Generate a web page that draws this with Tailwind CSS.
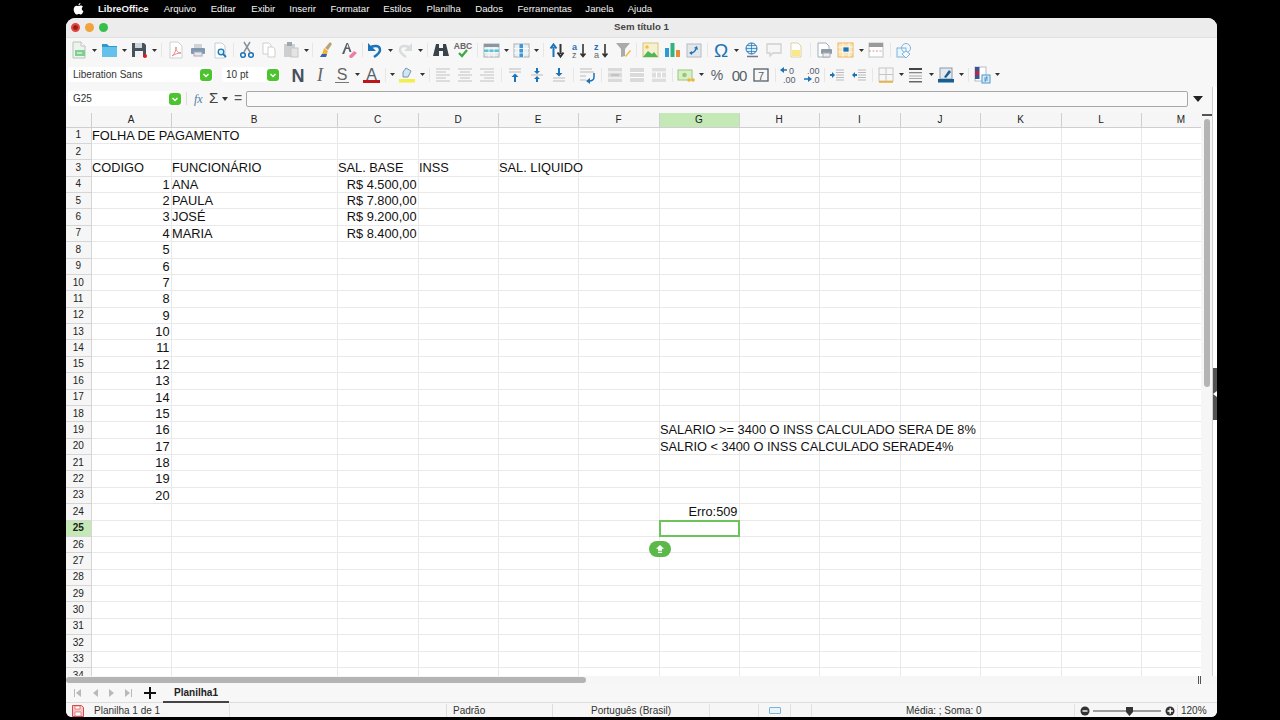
<!DOCTYPE html>
<html lang="en">
<head>
  <meta charset="UTF-8">
  <title>Sem título 1</title>
  <script src="https://cdn.jsdelivr.net/npm/@tailwindcss/browser@4"></script>
</head>
<body class="bg-black font-['Liberation_Sans',sans-serif] w-[1280px] h-[720px] overflow-hidden text-[#222]">
  <!-- Mac menu bar -->
  <div class="h-[18px] flex items-center text-[#f2f2f2] text-[9.6px] pl-[73px]">
    <svg class="w-[11px] h-[12px] mr-[14px]" viewBox="0 0 14 16"><path fill="#fff" d="M9.6 0c.1 1.200-1.100 2.900-2.700 2.900C6.800 1.500 8.100.1 9.600 0zM7 4.100c.8 0 1.700-.7 3-.7 1 0 2.200.5 2.900 1.600-2.400 1.500-2 4.800.6 5.900-.6 1.700-2 4.500-3.500 4.500-.9 0-1.300-.6-2.500-.6s-1.700.6-2.500.6C3.100 15.400.6 11.800.6 8.500c0-3 1.900-4.900 3.800-4.900 1.100 0 2 .5 2.600.5z"/></svg>
    <span class="font-bold mr-[15px]">LibreOffice</span>
    <span class="mr-[14.500px]">Arquivo</span>
    <span class="mr-[15.500px]">Editar</span>
    <span class="mr-[14px]">Exibir</span>
    <span class="mr-[14.500px]">Inserir</span>
    <span class="mr-[14px]">Formatar</span>
    <span class="mr-[15px]">Estilos</span>
    <span class="mr-[14.500px]">Planilha</span>
    <span class="mr-[14.500px]">Dados</span>
    <span class="mr-[13.500px]">Ferramentas</span>
    <span class="mr-[14px]">Janela</span>
    <span>Ajuda</span>
  </div>

  <!-- Window -->
  <div class="ml-[66px] w-[1151px] h-[699px] rounded-t-[9px] rounded-b-[6px] overflow-hidden bg-[#f7f7f7] flex flex-col">
    <div class="h-[20px] shrink-0 relative flex items-center justify-center bg-[#ececec] border-b border-[#e0e0e0] text-[9.7px] font-bold text-[#444]">
      <div class="absolute left-[5px] top-[5px] flex gap-[5px]">
        <span class="w-[9px] h-[9px] rounded-full bg-[#e5453d] border-[2.5px] border-[#e5453d] [box-shadow:inset_0_0_0_3px_#9c1c18]"></span>
        <span class="w-[9px] h-[9px] rounded-full bg-[#f2a33a]"></span>
        <span class="w-[9px] h-[9px] rounded-full bg-[#37bf4c]"></span>
      </div>
      <span>Sem título 1</span>
    </div>

    <div id="tb1" class="h-[24px] shrink-0 flex items-center pl-[2px]"></div>

    <div class="h-[25px] shrink-0 flex items-center pl-[2px]">
      <div class="w-[145px] h-[15px] rounded-[3px] bg-white flex items-center justify-between pl-[5px] pr-[1px] text-[10px] text-[#333]">
        Liberation Sans
        <span class="w-[12px] h-[12px] rounded-[3px] bg-[#4cc42e] flex items-center justify-center"><svg class="w-[8px] h-[8px]" viewBox="0 0 8 8"><path d="M1.500 3l2.500 2.500L6.500 3" stroke="#fff" stroke-width="1.500" fill="none"/></svg></span>
      </div>
      <div class="ml-[9px] w-[58px] h-[15px] rounded-[3px] bg-white flex items-center justify-between pl-[4px] pr-[1px] text-[10px] text-[#333]">
        10 pt
        <span class="w-[12px] h-[12px] rounded-[3px] bg-[#4cc42e] flex items-center justify-center"><svg class="w-[8px] h-[8px]" viewBox="0 0 8 8"><path d="M1.500 3l2.500 2.500L6.500 3" stroke="#fff" stroke-width="1.500" fill="none"/></svg></span>
      </div>
      <div id="tb2" class="flex items-center pl-[7px]"></div>
    </div>

    <div class="flex-1 min-h-0 flex">
      <div class="flex-1 min-w-0 flex flex-col">
        <!-- Formula bar -->
        <div class="h-[26px] shrink-0 flex items-center pl-[2px] pb-[3px] relative">
          <div class="w-[114px] h-[15px] rounded-[3px] bg-white flex items-center justify-between pl-[5px] pr-[1px] text-[10px] text-[#333]">
            G25
            <span class="w-[12px] h-[12px] rounded-[3px] bg-[#4cc42e] flex items-center justify-center"><svg class="w-[8px] h-[8px]" viewBox="0 0 8 8"><path d="M1.500 3l2.500 2.500L6.500 3" stroke="#fff" stroke-width="1.500" fill="none"/></svg></span>
          </div>
          <span class="ml-[4px] w-px h-[13px] bg-[#ddd]"></span>
          <span class="ml-[7px] w-[13px] text-[12px] italic text-[#4a7fa8] font-['Liberation_Serif',serif]">fx</span>
          <span class="ml-[2px] w-[12px] text-[15px] text-[#444]">Σ</span>
          <svg class="ml-[1px] w-[6px] h-[4px]" viewBox="0 0 6 4"><path d="M0 0h6L3 4z" fill="#333"/></svg>
          <span class="ml-[6px] w-[10px] text-[14px] text-[#555]">=</span>
          <div class="ml-[2px] w-[942px] h-[16px] rounded-[2px] border border-[#a8a8a8] bg-[#fafafa]"></div>
          <svg class="ml-[5px] w-[10px] h-[6px]" viewBox="0 0 10 6"><path d="M0 0h10L5 6z" fill="#222"/></svg>
        </div>
        <!-- Sheet -->
        <div class="flex-1 min-h-0 flex">
          <div class="flex-1 min-w-0 overflow-hidden relative bg-white">
            <div id="sheet" class="grid grid-cols-[25.5px_80px_166px_81px_80px_80px_81px_80px_80px_81px_80px_81px_80px_80px] grid-rows-[14.5px] auto-rows-[16.38px] text-[12.8px] leading-[16px] text-[#111]"></div>
            <!-- cell cursor and the little green badge -->
            <div class="absolute z-20 left-[592.5px] top-[406.5px] w-[81px] h-[17px] border-2 border-[#6cc35a]"></div>
            <div class="absolute z-20 left-[583px] top-[428px] w-[22px] h-[16px] rounded-[8px] bg-[#5cb848] flex items-center justify-center">
              <svg class="w-[10px] h-[10px]" viewBox="0 0 10 10"><path d="M5 1 9 4.800H7v2H3v-2H1zM3 7.700h4v1.300H3z" fill="#fff"/></svg>
            </div>
          </div>
          <!-- Vertical scroll -->
          <div class="w-[11px] shrink-0 bg-[#f6f6f6] flex flex-col items-center pt-[1px]">
            <span class="w-[10px] h-[2px] bg-[#555] mb-[3px]"></span>
            <span class="w-[6px] h-[268px] rounded-[3px] bg-[#b4b4b4]"></span>
          </div>
        </div>
      </div>
      <!-- Sidebar handle -->
      <div class="w-[5px] shrink-0 border-l border-[#d0d0d0] bg-white flex flex-col pt-[281px]">
        <div class="h-[52px] bg-[#525252] flex items-center justify-center">
          <svg class="w-[4px] h-[6px]" viewBox="0 0 4 6"><path d="M4 0v6L0 3z" fill="#fff"/></svg>
        </div>
      </div>
    </div>

    <!-- Horizontal scroll -->
    <div class="h-[8px] shrink-0 flex items-center relative bg-[#f6f6f6]">
      <span class="w-[520px] h-[6px] rounded-[3px] bg-[#b4b4b4]"></span>
      <span class="absolute left-[1132px] top-0 w-[3px] h-[8px] border-x border-[#555]"></span>
    </div>

    <!-- Sheet tabs -->
    <div class="h-[19px] shrink-0 flex items-center border-b border-[#dcdcdc] relative">
      <svg class="ml-[7px] w-[60px] h-[10px]" viewBox="0 0 60 10" fill="#b9b9b9">
        <path d="M1 1h1v8H1zM8 1v8L3 5z"/><path d="M25 1v8l-5-4z"/><path d="M36 1v8l5-4z"/><path d="M52 1v8l5-4zM58 1h1v8h-1z"/>
      </svg>
      <svg class="ml-[11px] w-[12px] h-[12px]" viewBox="0 0 12 12"><path d="M5 0h2v5h5v2H7v5H5V7H0V5h5z" fill="#111"/></svg>
      <div class="ml-[7px] w-[66px] h-[19px] flex items-center justify-center text-[10px] font-bold text-[#222] border-b-2 border-[#444]">Planilha1</div>
    </div>

    <!-- Status bar -->
    <div class="h-[14px] shrink-0 flex items-center pt-[1px] text-[10px] text-[#333] bg-[#f6f6f6]">
      <div class="w-[163px] flex items-center shrink-0 pl-[6px]">
        <svg class="w-[12px] h-[12px] mr-[10px]" viewBox="0 0 12 12"><path d="M.500.500h9l2 2v9H.500z" fill="#f6c8c8" stroke="#d84a4a"/><path d="M3 1h5v3H3zM3 7h6v4H3z" fill="#fff" stroke="#d84a4a" stroke-width=".6"/></svg>
        Planilha 1 de 1
      </div>
      <div class="w-[217px] h-full border-l border-[#e2e2e2]"></div>
      <div class="w-[106px] h-full border-l border-[#ddd] pl-[6px] flex items-center">Padrão</div>
      <div class="w-[157px] h-full border-l border-[#ddd] pl-[38px] flex items-center">Português (Brasil)</div>
      <div class="w-[49px] h-full border-l border-[#e2e2e2]"></div>
      <div class="w-[32px] h-full border-l border-[#e2e2e2] flex items-center justify-center"><span class="w-[12px] h-[7px] rounded-[1px] border border-[#7fb2d9] bg-[#e9f3fa]"></span></div>
      <div class="w-[21px] h-full border-l border-[#e2e2e2]"></div>
      <div class="w-[263px] h-full border-l border-[#e2e2e2] flex items-center pl-[94px]">Média: ; Soma: 0</div>
      <div class="w-[103px] h-full border-l border-[#e2e2e2] flex items-center pl-[5px]">
        <svg class="w-[96px] h-[10px]" viewBox="0 0 96 10">
          <circle cx="5" cy="5" r="4.500" fill="#333"/><rect x="2.500" y="4.300" width="5" height="1.400" fill="#fff"/>
          <rect x="13" y="4.500" width="68" height="1" fill="#444"/>
          <path d="M46 1h7v5l-3.500 4L46 6z" fill="#333"/>
          <circle cx="90" cy="5" r="4.500" fill="#333"/><path d="M87.500 4.300h2v-2h1.400v2h2v1.400h-2v2h-1.400v-2h-2z" fill="#fff"/>
        </svg>
      </div>
      <div class="flex-1 h-full border-l border-[#e2e2e2] flex items-center pl-[3px]">120%</div>
    </div>
  </div>

  <script>
    // Toolbar icons, drawn on a 22x22 box
    const icons = {
      newdoc: '<path d="M5 3h8l4 4v12H5z" fill="#eef3ee" stroke="#b9c3b9"/><path d="M13 3v4h4" fill="#fff" stroke="#b9c3b9"/><rect x="7" y="11" width="10" height="6" fill="#7fcf92"/><path d="M9 14h5" stroke="#fff"/>',
      folder: '<path d="M4 5h5l2 2h8v11H4z" fill="#2f98cf"/><rect x="4" y="8" width="15" height="10" fill="#63c1ea"/>',
      save: '<path d="M4 4h12l2 2v12H4z" fill="#46525c"/><rect x="7" y="4" width="7" height="5" fill="#cfd6db"/><rect x="7" y="12" width="8" height="6" fill="#f3f3f3"/><circle cx="17" cy="17" r="2" fill="#d81e1e"/>',
      pdf: '<path d="M5 3h8l4 4v12H5z" fill="#fff" stroke="#d0d0d0"/><path d="M7 17c3-2 4-6 4-9 0 4 2 6 5 6-3 0-6 1-9 3z" fill="none" stroke="#e58a8a"/>',
      print: '<rect x="7" y="5" width="8" height="4" fill="#cfd4d9"/><rect x="4" y="9" width="14" height="6" rx="1" fill="#7f99b0"/><rect x="7" y="13" width="8" height="4" fill="#e8e8e8" stroke="#aab"/>',
      preview: '<path d="M6 4h7l3 3v12H6z" fill="#fff" stroke="#c4ced7"/><circle cx="12" cy="13" r="2.800" fill="#d9ecf7" stroke="#1d78b5" stroke-width="1.300"/><path d="M14 15l3 3" stroke="#1d78b5" stroke-width="1.800"/>',
      cut: '<path d="M8 13 14 3M14 13 8 3" stroke="#8a939a" stroke-width="1.500"/><circle cx="7" cy="16" r="2.300" fill="none" stroke="#1b73b8" stroke-width="1.500"/><circle cx="15" cy="16" r="2.300" fill="none" stroke="#1b73b8" stroke-width="1.500"/>',
      copy: '<path d="M5 4h6l2 2v9H5z" fill="#fff" stroke="#cfcfcf"/><path d="M10 8h5l2 2v8h-7z" fill="#fff" stroke="#cfcfcf"/>',
      paste: '<rect x="4" y="5" width="11" height="13" fill="#cdd0d3"/><rect x="7" y="3" width="5" height="4" fill="#a0a6ab"/><rect x="11" y="9" width="7" height="9" fill="#e4e4e4" stroke="#c6c6c6"/>',
      brush: '<path d="M16 3l2 2-4 6-3-2z" fill="#b7a27a"/><path d="M10 9l4 3-2 6H6c2-2 3-5 4-9z" fill="#f0b43c"/><path d="M6 18h6l1-3H8z" fill="#3a63a8"/>',
      clear: '<path d="M4 15 8.500 4h1.500l3.500 9h-2l-1-3H8l-1.800 5zM8.400 8.500h2.200L9.400 5z" fill="#55606a"/><path d="M11 17l5-5 3 2-5 5h-2z" fill="#ee7fa3"/>',
      undo: '<path d="M6 9c3-3 10-3 10 2 0 3-3 5-6 7" fill="none" stroke="#1b73b8" stroke-width="2.500"/><path d="M4 4v8h8z" fill="#1b73b8"/>',
      redo: '<path d="M16 9c-3-3-10-3-10 2 0 3 3 5 6 7" fill="none" stroke="#d9dcdf" stroke-width="2.500"/><path d="M18 4v8h-8z" fill="#d9dcdf"/>',
      find: '<path d="M6 5h3v4h4V5h3l3 12h-6v-5H9v5H3z" fill="#39434b"/>',
      spell: '<text x="11" y="10" text-anchor="middle" font-size="8.500" font-weight="700" fill="#666" font-family="Liberation Sans">ABC</text><path d="M7 14l3 3 5-6" fill="none" stroke="#3aa845" stroke-width="2.200"/>',
      table: '<rect x="4" y="5" width="15" height="13" fill="#ececec" stroke="#a9b1b6"/><rect x="4" y="5" width="15" height="3" fill="#8b979f"/><rect x="4" y="10" width="15" height="3.500" fill="#5dc1d8"/><path d="M9 8v10M14 8v10M4 10h15M4 13.500h15" stroke="#fff" stroke-width=".8"/>',
      cols: '<rect x="4" y="5" width="15" height="13" fill="#ecefef" stroke="#a9b1b6"/><rect x="9" y="5" width="4.500" height="13" fill="#3f96d6"/><path d="M4 9.500h15M4 14h15M9 5v13M13.500 5v13" stroke="#fff" stroke-width=".8"/>',
      sort: '<path d="M7.500 18V8M4.500 9.500l3-4 3 4" fill="none" stroke="#1b73b8" stroke-width="2"/><path d="M14.500 5v10M11.500 13.500l3 4 3-4" fill="none" stroke="#333" stroke-width="2"/>',
      az: '<text x="4" y="11" font-size="9" font-weight="700" fill="#1b73b8" font-family="Liberation Sans">a</text><text x="4" y="19" font-size="9" fill="#666" font-family="Liberation Sans">z</text><path d="M15 5v12M12.500 14.500l2.500 3 2.500-3" fill="none" stroke="#333" stroke-width="1.600"/>',
      za: '<text x="4" y="11" font-size="9" font-weight="700" fill="#1b73b8" font-family="Liberation Sans">z</text><text x="4" y="19" font-size="9" fill="#666" font-family="Liberation Sans">a</text><path d="M15 5v12M12.500 14.500l2.500 3 2.500-3" fill="none" stroke="#333" stroke-width="1.600"/>',
      filter: '<path d="M4 4h14l-5 6v7l-4 1v-8z" fill="#a7abae"/><path d="M13 17l5-6 1 1-5 6z" fill="#f1b83b"/>',
      image: '<rect x="4" y="4" width="15" height="14" fill="#f7f0d0" stroke="#d6c67f"/><circle cx="8" cy="8" r="1.800" fill="#f1c232"/><path d="M4 18l5-6 4 3 2-2 4 5z" fill="#4cb85c"/>',
      chart: '<rect x="4" y="9" width="4" height="9" fill="#2b9ad6"/><rect x="9.500" y="4" width="4" height="14" fill="#34b37a"/><rect x="15" y="11" width="4" height="7" fill="#e98b3a"/>',
      pivot: '<rect x="4" y="5" width="14" height="13" fill="#e3e7ea" stroke="#b5bcc2"/><path d="M8 14c2 0 4-2 5-4" stroke="#1b73b8" stroke-width="1.500" fill="none"/><path d="M11 9l3-2 1 4zM9 12v4l-3-2z" fill="#1b73b8"/>',
      omega: '<text x="11" y="18" text-anchor="middle" font-size="19" fill="#1b73b8" font-family="Liberation Sans">Ω</text>',
      link: '<circle cx="10.500" cy="9.500" r="5.500" fill="#dcedf8" stroke="#1b73b8"/><path d="M5 9.500h11M10.500 4v11M6 6.500h9M6 12.500h9" stroke="#1b73b8" stroke-width=".7"/><path d="M6 17.500h11" stroke="#778" stroke-width="1.300"/>',
      comment: '<path d="M4 5h14v9H10l-3 3v-3H4z" fill="#f6f6f6" stroke="#d0d0d0" stroke-width="1.300"/>',
      note: '<path d="M6 4h7l3 3v11H6z" fill="#fff" stroke="#ddd39c"/><rect x="7" y="11" width="8" height="6" fill="#f9e78e"/>',
      header: '<path d="M5 4h8l3 3v11H5z" fill="#fff" stroke="#9db0c0"/><rect x="8" y="10" width="11" height="5" rx="1" fill="#8d9ba7"/><rect x="10" y="14" width="7" height="4" fill="#eee" stroke="#aab"/>',
      freeze: '<rect x="3" y="4" width="15" height="14" fill="#fbe5b8" stroke="#eab55e"/><rect x="8" y="8" width="6" height="5" fill="#1b73b8"/><path d="M3 8h15M3 13h15M8 4v14M14 4v14" stroke="#fff" stroke-width=".7"/>',
      split: '<rect x="4" y="4" width="14" height="14" fill="#fff" stroke="#c2c2c2"/><rect x="4" y="4" width="14" height="4" fill="#9a9a9a"/><path d="M4 12h14" stroke="#d99" stroke-dasharray="2 1.500"/>',
      shapes: '<rect x="4" y="9" width="9" height="9" fill="#eef6fb" stroke="#7ab6df"/><circle cx="13" cy="9" r="4.500" fill="none" stroke="#7ab6df"/><path d="M13 12l4 3-4 4-4-4z" fill="#f7fbfe" stroke="#7ab6df"/>',
      bold: '<text x="11" y="17.500" text-anchor="middle" font-size="18" font-weight="700" fill="#46525c" font-family="Liberation Sans">N</text>',
      italic: '<text x="11" y="17" text-anchor="middle" font-size="18" font-style="italic" fill="#666" font-family="Liberation Serif">I</text>',
      under: '<text x="11" y="15.500" text-anchor="middle" font-size="16" fill="#666" font-family="Liberation Sans">S</text><rect x="4" y="18" width="14" height="1" fill="#777"/>',
      fontcolor: '<text x="10.500" y="15.500" text-anchor="middle" font-size="16" fill="#55606a" font-family="Liberation Sans">A</text><rect x="2" y="16" width="17" height="3" fill="#c0141c"/>',
      hilite: '<path d="M7 13V8l3-4 5 3-3 6z" fill="#d6e4f0" stroke="#6d96bb"/><rect x="3" y="15" width="16" height="3.500" fill="#f5ec4d"/>',
      left: '<path d="M4 5h14M4 8h10M4 11h14M4 14h10M4 17h14" stroke="#c2c2c2"/>',
      center: '<path d="M4 5h14M6 8h10M4 11h14M6 14h10M4 17h14" stroke="#c2c2c2"/>',
      right: '<path d="M4 5h14M8 8h10M4 11h14M8 14h10M4 17h14" stroke="#c2c2c2"/>',
      top: '<path d="M5 5h12M5 8h12" stroke="#bbb"/><path d="M11 18v-6" stroke="#1b73b8" stroke-width="2"/><path d="M7.500 13l3.500-3.500 3.500 3.500z" fill="#1b73b8"/>',
      mid: '<path d="M5 11h12" stroke="#bbb"/><path d="M11 4v4M11 14v4" stroke="#1b73b8" stroke-width="2"/><path d="M8 7l3 3 3-3zM8 15l3-3 3 3z" fill="#1b73b8"/>',
      bottom: '<path d="M5 14h12M5 17h12" stroke="#bbb"/><path d="M11 4v6" stroke="#1b73b8" stroke-width="2"/><path d="M7.500 9l3.500 3.500L14.500 9z" fill="#1b73b8"/>',
      wrap: '<path d="M4 5h12M4 8h14M4 12h6M4 16h6" stroke="#bbb"/><path d="M18 9v4c0 3-2 4-5 4" fill="none" stroke="#1b73b8" stroke-width="1.500"/><path d="M14 14v6l-4-3z" fill="#1b73b8"/>',
      merge: '<rect x="4" y="4" width="14" height="14" fill="#dadada"/><path d="M4 8h14M4 14h14" stroke="#fff"/><path d="M7 11h8" stroke="#aaa"/>',
      merge2: '<rect x="4" y="4" width="14" height="14" fill="#dadada"/><path d="M4 8.500h14M4 13.500h14" stroke="#fff"/>',
      merge3: '<rect x="4" y="4" width="14" height="14" fill="#dedede"/><path d="M4 8h14M4 14h14M8.500 8v6M13.500 8v6" stroke="#fff"/>',
      money: '<rect x="3" y="6" width="14" height="10" fill="#d9efcb" stroke="#96c976"/><circle cx="9.500" cy="11" r="2.300" fill="#96c976"/><circle cx="14" cy="16" r="1.800" fill="#f0b43c"/><circle cx="18" cy="16" r="1.800" fill="#f0b43c"/>',
      percent: '<text x="11" y="16" text-anchor="middle" font-size="14" fill="#55606a" font-family="Liberation Sans">%</text>',
      zero: '<text x="11" y="16.500" text-anchor="middle" font-size="15" fill="#55606a" font-family="Liberation Sans" letter-spacing="-1">00</text>',
      seven: '<rect x="4" y="5" width="14" height="12" fill="none" stroke="#55606a" stroke-width="1.300"/><text x="11" y="15.500" text-anchor="middle" font-size="11" fill="#55606a" font-family="Liberation Sans">7</text>',
      adddec: '<text x="11" y="10" font-size="9" fill="#55606a" font-family="Liberation Sans">0</text><text x="5" y="19" font-size="9" fill="#55606a" font-family="Liberation Sans">.00</text><path d="M3 6h6" stroke="#1b73b8" stroke-width="1.500"/><path d="M6 3v6L2 6z" fill="#1b73b8"/>',
      remdec: '<text x="7" y="10" font-size="9" fill="#55606a" font-family="Liberation Sans">.00</text><text x="12" y="19" font-size="9" fill="#55606a" font-family="Liberation Sans">.0</text><path d="M4 15h5" stroke="#1b73b8" stroke-width="1.500"/><path d="M8 12v6l4-3z" fill="#1b73b8"/>',
      indent: '<path d="M10 6h8M10 8.500h8M10 11h8M10 13.500h8M10 16h8" stroke="#bbb"/><path d="M4 11h3" stroke="#1b73b8" stroke-width="2"/><path d="M6 8v6l3-3z" fill="#1b73b8"/>',
      outdent: '<path d="M10 6h8M10 8.500h8M10 11h8M10 13.500h8M10 16h8" stroke="#bbb"/><path d="M6 11h3" stroke="#1b73b8" stroke-width="2"/><path d="M7 8v6l-3-3z" fill="#1b73b8"/>',
      borders: '<rect x="4" y="4" width="14" height="13" fill="none" stroke="#c6c6c6"/><path d="M11 4v13M4 10.500h14" stroke="#c6c6c6"/><rect x="4" y="17" width="14" height="1.800" fill="#eeb23e"/>',
      lines: '<rect x="4" y="4" width="13" height="2" fill="#444"/><rect x="4" y="8" width="13" height="1.300" fill="#888"/><path d="M4 12h13M4 14.500h13" stroke="#aaa"/><rect x="4" y="17" width="13" height="1.500" fill="#666"/>',
      bcolor: '<rect x="5" y="4" width="12" height="11" fill="#e5e9ee" stroke="#8b9aa9"/><path d="M9 13l5-7 2 2-5 6z" fill="#1d5e92"/><rect x="3" y="15" width="16" height="3.500" fill="#165f93"/>',
      cond: '<rect x="4" y="3" width="11" height="14" fill="#fff" stroke="#b5bcc5"/><rect x="4" y="3" width="4.500" height="4" fill="#39539b"/><rect x="4" y="7" width="4.500" height="4" fill="#b42a3a"/><rect x="4" y="11" width="4.500" height="4" fill="#39539b"/><rect x="11" y="11" width="8" height="8" fill="#dbeaf6" stroke="#4b98cf"/><path d="M13 14h4M13 16h4M14 18l2-6" stroke="#3b8cc7" stroke-width=".8"/>'
    };

    const sepClass = {
      1: 'w-[1px]', 2: 'w-[2px]', 4: 'w-[4px]', 5: 'w-[5px]', 6: 'w-[6px]', 7: 'w-[7px]'
    };

    function renderBar(el, list) {
      el.innerHTML = list.map(item => {
        if (item === 'a') {
          return '<span class="w-[8px] flex justify-center"><svg class="w-[5px] h-[3px]" viewBox="0 0 5 3"><path d="M0 0h5L2.500 3z" fill="#333"/></svg></span>';
        }
        if (typeof item === 'number') {
          // thin separator line only when the gap is wide enough
          return `<span class="${sepClass[item]} h-[14px] flex justify-center">${item > 2 ? '<span class="w-px h-full bg-[#e6e6e6]"></span>' : ''}</span>`;
        }
        return `<svg class="w-[22px] h-[22px] shrink-0" viewBox="0 0 22 22">${icons[item]}</svg>`;
      }).join('');
    }

    renderBar(document.getElementById('tb1'), [
      'newdoc', 'a', 'folder', 'a', 'save', 'a', 7, 'pdf', 'print', 'preview', 5, 'cut', 'copy', 'paste', 'a', 4,
      'brush', 2, 'clear', 4, 'undo', 'a', 'redo', 'a', 6, 'find', 'spell', 6, 'table', 'a', 'cols', 'a', 6,
      'sort', 'az', 'za', 'filter', 5, 'image', 'chart', 'pivot', 5, 'omega', 'a', 1, 'link', 'comment', 'note', 6,
      'header', 'freeze', 'a', 'split', 6, 'shapes'
    ]);
    renderBar(document.getElementById('tb2'), [
      'bold', 'italic', 'under', 'a', 'fontcolor', 5, 'a', 'hilite', 'a', 6, 'left', 'center', 'right', 6,
      'top', 'mid', 'bottom', 6, 'wrap', 6, 'merge', 'merge2', 'merge3', 5, 'money', 'a', 1, 'percent', 'zero', 'seven', 6,
      'adddec', 'remdec', 4, 'indent', 'outdent', 5, 'borders', 'a', 'lines', 'a', 'bcolor', 'a', 6, 'cond', 'a'
    ]);

    // Sheet data
    const letters = 'ABCDEFGHIJKLM'.split('');
    const cells = {
      A1: 'FOLHA DE PAGAMENTO',
      A3: 'CODIGO', B3: 'FUNCIONÁRIO', C3: 'SAL. BASE', D3: 'INSS', E3: 'SAL. LIQUIDO',
      B4: 'ANA', B5: 'PAULA', B6: 'JOSÉ', B7: 'MARIA',
      C4: 'R$ 4.500,00', C5: 'R$ 7.800,00', C6: 'R$ 9.200,00', C7: 'R$ 8.400,00',
      G19: 'SALARIO >= 3400 O INSS CALCULADO SERA DE 8%',
      G20: 'SALRIO < 3400 O INSS CALCULADO SERADE4%',
      G24: 'Erro:509'
    };
    for (let n = 1; n <= 20; n++) cells['A' + (n + 3)] = n;

    const rightAligned = key => typeof cells[key] === 'number' || /^C[4-7]$/.test(key) || key === 'G24';

    let html = '<div class="bg-[#f6f6f6] border-r border-b border-[#cfcfcf]"></div>';
    letters.forEach(l => {
      const active = l === 'G';
      html += `<div class="${active ? 'bg-[#c4e8b6]' : 'bg-[#f6f6f6]'} border-r border-b border-[#cfcfcf] flex items-center justify-center text-[10px] text-[#222]">${l}</div>`;
    });
    for (let row = 1; row <= 34; row++) {
      const active = row === 25;
      html += `<div class="${active ? 'bg-[#c4e8b6] font-bold' : 'bg-[#f6f6f6]'} border-r border-b border-[#d6d6d6] flex items-center justify-center text-[10px] text-[#222]">${row}</div>`;
      letters.forEach(l => {
        const key = l + row;
        const value = cells[key] === undefined ? '' : cells[key];
        const align = rightAligned(key) ? 'text-right pr-[1px]' : 'pl-[0.5px]';
        // text sits above the grid lines, so long labels run over the next cells
        html += `<div class="border-r border-b border-[#e9e9e9] ${align} whitespace-nowrap"><span class="relative z-10">${value}</span></div>`;
      });
    }
    document.getElementById('sheet').innerHTML = html;
  </script>
</body>
</html>
